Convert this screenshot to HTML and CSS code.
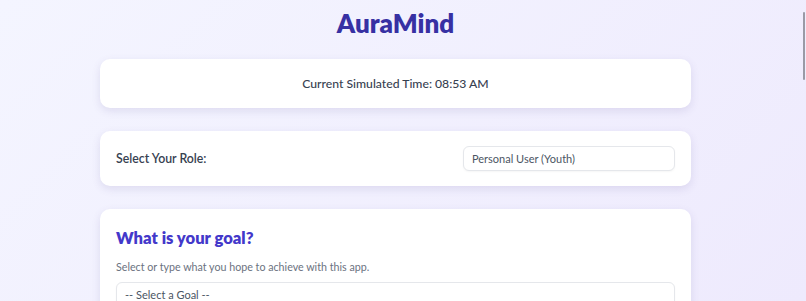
FILE: index.html
```html
<!DOCTYPE html>
<html lang="en">
<head>
  <meta charset="UTF-8" />
  <meta name="viewport" content="width=device-width, initial-scale=1.0"/>
  <title>AuraMind</title>
  <link rel="stylesheet" href="styles.css">
</head>
<body>

  <div class="app">
    <h1 class="logo">AuraMind</h1>

    <div class="card time-card">
      Current Simulated Time: <span id="sim-time">08:53 AM</span>
    </div>

    <div class="card role-card">
      <label for="role">Select Your Role:</label>
      <select id="role">
        <option>Personal User (Youth)</option>
        <option>Parent</option>
        <option>Educator</option>
      </select>
    </div>

    <div class="card goal-card">
      <h2>What is your goal?</h2>
      <p class="hint">Select or type what you hope to achieve with this app.</p>
      <select id="goal">
        <option>-- Select a Goal --</option>
        <option>Reduce stress</option>
        <option>Sleep better</option>
        <option>Build focus</option>
      </select>
      <p class="hint">Or type your own goal below.</p>
    </div>
  </div>

  <div class="scroll-thumb"></div>

</body>
</html>
```

FILE: styles.css
```css
html {
  height: 100%;
}

body {
  min-height: 100%;
  font-family: 'Segoe UI', Lato, sans-serif;
  background: linear-gradient(135deg, #f4f5ff, #eeeafd);
  margin: 0;
  padding-right: 15px;
  color: #374151;
}

.app {
  width: 591px;
  margin: 0 auto;
  padding: 8px 0 40px;
  display: flex;
  flex-direction: column;
  gap: 23px;
}

.logo {
  margin: 0 0 -2px;
  text-align: center;
  font-size: 26px;
  font-weight: 800;
  color: #3730a3;
  line-height: 30px;
}

.card {
  background: #fff;
  border-radius: 10px;
  box-shadow: 0 3px 8px rgba(90, 80, 150, 0.14);
  padding: 16px;
}

.time-card {
  text-align: center;
  font-size: 12.2px;
  line-height: 17px;
  font-weight: 500;
}

.role-card {
  display: flex;
  align-items: center;
  justify-content: space-between;
  padding: 15px 16px;
}

.role-card label {
  font-size: 12.3px;
  font-weight: 600;
}

select {
  font-family: inherit;
  font-size: 11px;
  color: #4b5563;
  background: #fff;
  border: 1px solid #e5e7eb;
  border-radius: 6px;
  padding: 0 8px;
  height: 25px;
  appearance: none;
  box-shadow: 0 1px 2px rgba(0, 0, 0, 0.04);
}

#role {
  width: 212px;
}

.goal-card {
  padding: 18px 16px;
}

.goal-card h2 {
  margin: 0 0 11px;
  font-size: 16.6px;
  font-weight: 800;
  color: #4338ca;
  line-height: 22px;
}

.hint {
  margin: 0 0 9px;
  font-size: 10.7px;
  color: #6b7280;
}

#goal {
  width: 100%;
  margin-bottom: 10px;
}

/* thin overlay scrollbar like the original capture */
.scroll-thumb {
  position: fixed;
  top: 12px;
  right: 1px;
  width: 2px;
  height: 68px;
  border-radius: 1px;
  background: #9a9aa6;
}
```
